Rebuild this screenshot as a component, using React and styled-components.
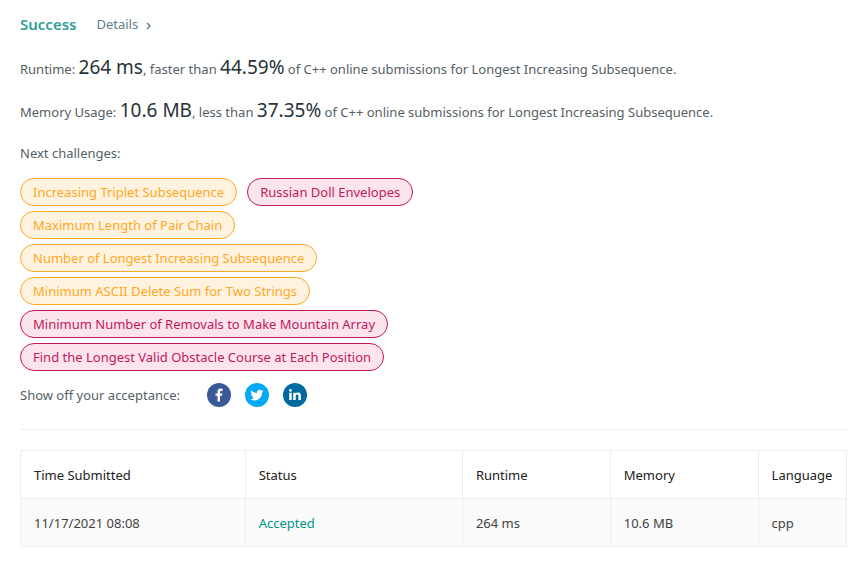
import React from "react";
import styled, { createGlobalStyle } from "styled-components";

const GlobalStyle = createGlobalStyle`
  * { box-sizing: border-box; }
  body {
    margin: 0;
    background: #fff;
    color: #546065;
    font-family: "Noto Sans", "Open Sans", sans-serif;
    font-size: 13px;
  }
`;

const Page = styled.main`
  padding: 0 12px 14px 20px;
`;

const Header = styled.header`
  display: flex;
  align-items: center;
  gap: 20px;
  height: 48px;
`;

const Result = styled.h1`
  margin: 0;
  color: #2f9f98;
  font-size: 15px;
  font-weight: 600;
`;

const DetailsLink = styled.a`
  display: flex;
  align-items: center;
  gap: 8px;
  color: #607d8b;
  text-decoration: none;
`;

const Chevron = styled.svg`
  width: 5px;
  height: 8px;
  margin-top: 3px;
`;

const Stat = styled.p`
  margin: 0;
  line-height: 43px;
`;

const Figure = styled.span`
  color: #263238;
  font-size: 19px;
  line-height: 24px;
`;

const ChallengesLabel = styled.h2`
  margin: 0 0 6px;
  font-size: 13px;
  font-weight: 400;
  line-height: 38px;
`;

const Challenges = styled.nav`
  display: flex;
  flex-wrap: wrap;
  gap: 5px 10px;
  max-width: 500px;
`;

const levels = {
  medium: { ink: "#ffa726", fill: "#fff3e0" },
  hard: { ink: "#c2185b", fill: "#fce4ec" },
};

const Challenge = styled.a`
  padding: 0 12px;
  border: 1px solid ${(p) => levels[p.$level].ink};
  border-radius: 14px;
  background: ${(p) => levels[p.$level].fill};
  color: ${(p) => levels[p.$level].ink};
  line-height: 26px;
  text-decoration: none;
  white-space: nowrap;
`;

const Share = styled.section`
  display: flex;
  align-items: center;
  gap: 27px;
  height: 48px;
`;

const ShareButtons = styled.div`
  display: flex;
  gap: 14px;
`;

const ShareButton = styled.button`
  display: block;
  width: 24px;
  height: 24px;
  padding: 0;
  border: 0;
  border-radius: 50%;
  background: ${(p) => p.$color};
  cursor: pointer;

  svg {
    display: block;
    width: 24px;
    height: 24px;
  }
`;

const Divider = styled.hr`
  height: 1px;
  margin: 10px 0 20px;
  border: 0;
  background: #eee;
`;

const Table = styled.table`
  width: 100%;
  border: 1px solid #eee;
  border-collapse: collapse;
  table-layout: fixed;
`;

const Column = styled.col`
  width: ${(p) => p.$share}%;
`;

const HeadCell = styled.th`
  height: 48px;
  padding: 0 13px;
  border: 1px solid #eee;
  color: #212121;
  font-weight: 400;
  text-align: left;
  white-space: nowrap;
`;

const Cell = styled.td`
  height: 48px;
  padding: 0 13px;
  border: 1px solid #eee;
  background: #fafafa;
  color: #424242;
`;

const StatusLink = styled.a`
  color: #009688;
  text-decoration: none;
`;

const challenges = [
  ["Increasing Triplet Subsequence", "medium"],
  ["Russian Doll Envelopes", "hard"],
  ["Maximum Length of Pair Chain", "medium"],
  ["Number of Longest Increasing Subsequence", "medium"],
  ["Minimum ASCII Delete Sum for Two Strings", "medium"],
  ["Minimum Number of Removals to Make Mountain Array", "hard"],
  ["Find the Longest Valid Obstacle Course at Each Position", "hard"],
];

const networks = [
  {
    name: "Facebook",
    color: "#3b5998",
    path: "M13 18.500v-5.700h2l.4-2.400H13V9.100c0-.7.300-1.200 1.200-1.200h1.300V5.700c-.3 0-1-.1-1.800-.1-2 0-3.200 1.100-3.200 3.100v1.700H8.500v2.400h2v5.700z",
  },
  {
    name: "Twitter",
    color: "#03a9f4",
    path: "M18.500 8c-.5.200-1 .4-1.500.4.500-.3 1-.9 1.200-1.500-.5.300-1.100.5-1.700.7A2.700 2.700 0 0 0 11.900 10C9.700 9.900 7.700 8.800 6.300 7.200c-.7 1.200-.3 2.800.8 3.600-.4 0-.8-.1-1.200-.3 0 1.300.9 2.400 2.200 2.700-.4.100-.8.100-1.200 0 .3 1.100 1.300 1.800 2.500 1.900-1.100.8-2.500 1.200-4 1.100 5.300 3.300 11.700-.3 11.700-6.400v-.4c.6-.4 1-.8 1.400-1.400z",
  },
  {
    name: "LinkedIn",
    color: "#0069a0",
    path: "M6.200 9.700h2.500V17H6.200zM7.500 6a1.400 1.400 0 1 1 0 2.800 1.400 1.400 0 0 1 0-2.800zM10.200 9.700h2.400v1c.4-.7 1.200-1.200 2.300-1.200 2.500 0 3 1.600 3 3.600V17h-2.500v-3.500c0-.9 0-1.900-1.200-1.900s-1.500.9-1.500 1.900V17h-2.500z",
  },
];

const columns = [
  ["Time Submitted", 27.2],
  ["Status", 26.3],
  ["Runtime", 17.9],
  ["Memory", 17.9],
  ["Language", 10.7],
];

export default function App() {
  return (
    <>
      <GlobalStyle />
      <Page>
        <Header>
          <Result>Success</Result>
          <DetailsLink href="#details">
            Details
            <Chevron viewBox="0 0 5 8" aria-hidden="true">
              <path d="M1 1l3 3-3 3" fill="none" stroke="currentColor" strokeWidth="1.4" />
            </Chevron>
          </DetailsLink>
        </Header>
        <Stat>
          Runtime: <Figure>264 ms</Figure>, faster than <Figure>44.59%</Figure> of C++ online
          submissions for Longest Increasing Subsequence.
        </Stat>
        <Stat>
          Memory Usage: <Figure>10.6 MB</Figure>, less than <Figure>37.35%</Figure> of C++ online
          submissions for Longest Increasing Subsequence.
        </Stat>
        <ChallengesLabel>Next challenges:</ChallengesLabel>
        <Challenges aria-label="Next challenges">
          {challenges.map(([title, level]) => (
            <Challenge key={title} href="#challenge" $level={level}>
              {title}
            </Challenge>
          ))}
        </Challenges>
        <Share>
          <span>Show off your acceptance:</span>
          <ShareButtons>
            {networks.map((n) => (
              <ShareButton key={n.name} type="button" aria-label={n.name} $color={n.color}>
                <svg viewBox="0 0 24 24" fill="#fff" aria-hidden="true">
                  <path d={n.path} />
                </svg>
              </ShareButton>
            ))}
          </ShareButtons>
        </Share>
        <Divider />
        <Table>
          <colgroup>
            {columns.map(([name, share]) => (
              <Column key={name} $share={share} />
            ))}
          </colgroup>
          <thead>
            <tr>
              {columns.map(([name]) => (
                <HeadCell key={name} scope="col">{name}</HeadCell>
              ))}
            </tr>
          </thead>
          <tbody>
            <tr>
              <Cell>11/17/2021 08:08</Cell>
              <Cell><StatusLink href="#submission">Accepted</StatusLink></Cell>
              <Cell>264 ms</Cell>
              <Cell>10.6 MB</Cell>
              <Cell>cpp</Cell>
            </tr>
          </tbody>
        </Table>
      </Page>
    </>
  );
}
